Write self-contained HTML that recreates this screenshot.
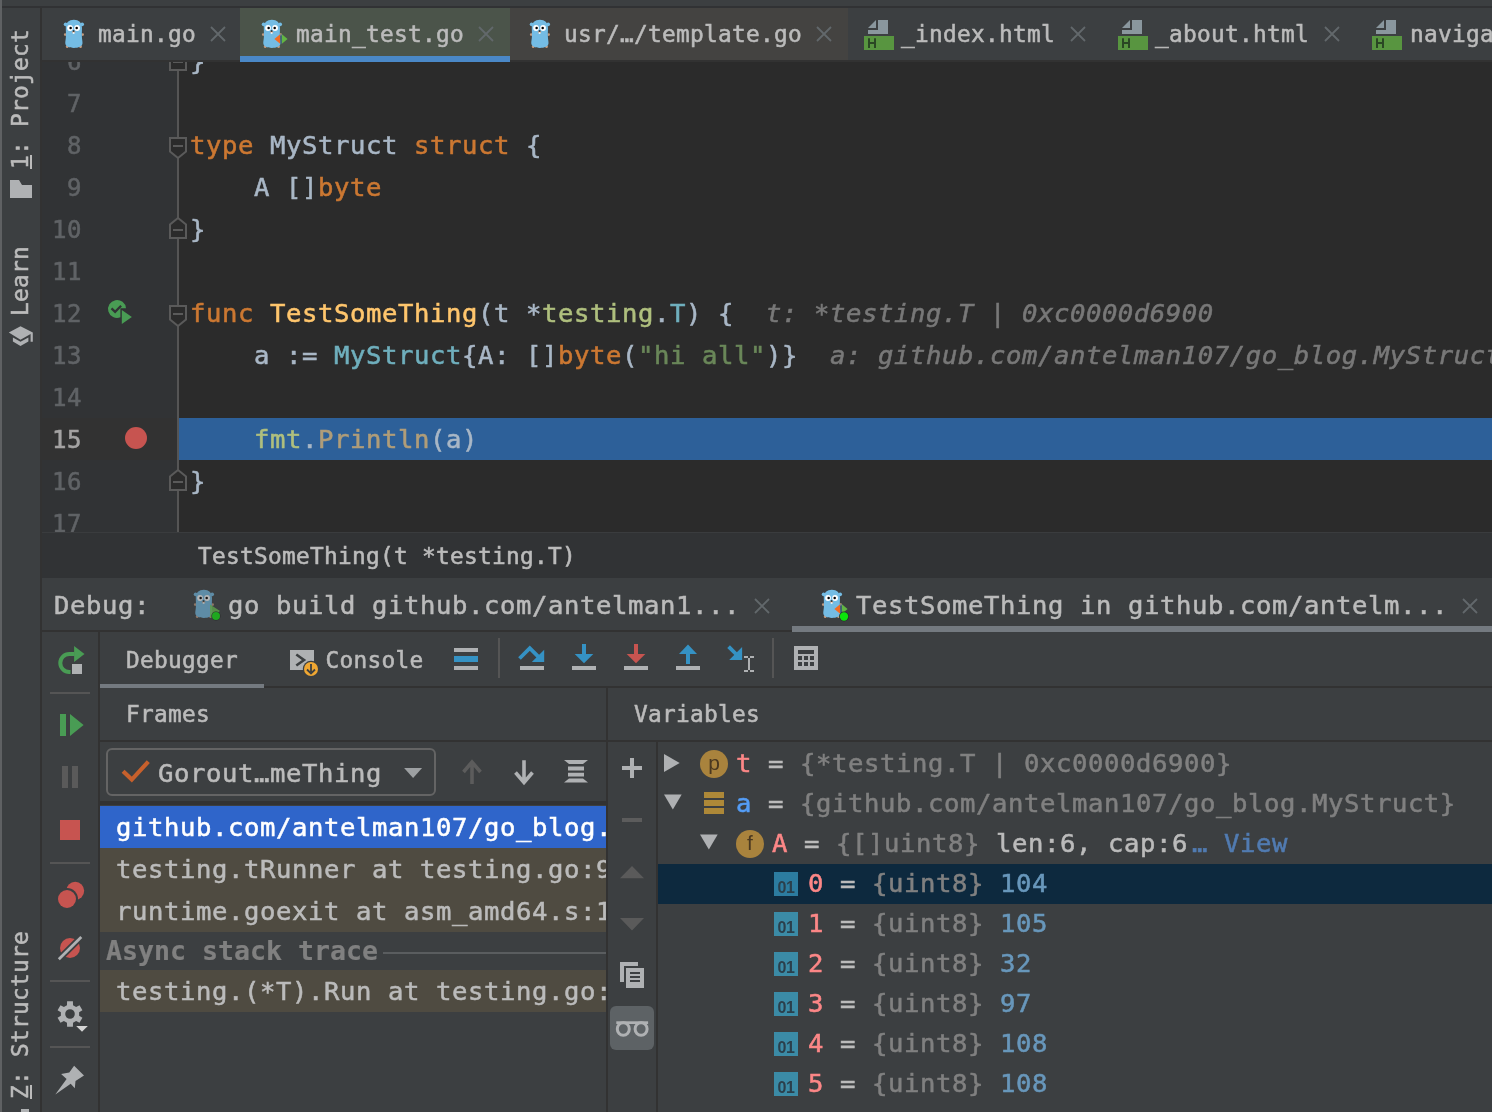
<!DOCTYPE html>
<html><head><meta charset="utf-8">
<style>
html,body{margin:0;padding:0;background:#2b2b2b;}
body{will-change:transform;width:1492px;height:1112px;position:relative;overflow:hidden;font-family:"DejaVu Sans Mono","Liberation Mono",monospace;color:#bbbbbb;-webkit-text-stroke:0.55px;}
.abs{position:absolute;}
.f24{font-size:22.8px;letter-spacing:0.273px;white-space:pre;}
.fln{font-size:24px;letter-spacing:0.5px;white-space:pre;}
.f26{font-size:25.6px;letter-spacing:0.588px;white-space:pre;}
svg{position:absolute;overflow:visible;}
/* top */
#topstrip{left:0;top:0;width:1492px;height:6px;background:#3c3f41;}
#topline{left:0;top:6px;width:1492px;height:2px;background:#313234;}
/* left stripe */
#lstripe{left:0;top:8px;width:42px;height:1104px;background:#3c3f41;}
#lstripe0{left:0;top:0px;width:2px;height:1112px;background:#5f6163;}
#lstripeR{left:40px;top:8px;width:2px;height:1104px;background:#323232;}
.vtext{position:absolute;transform-origin:0 0;transform:rotate(-90deg);line-height:28px;height:28px;color:#bbbbbb;}
/* tabs */
#tabbar{left:42px;top:8px;width:1450px;height:52px;background:#3c3f41;}
.tab{position:absolute;top:8px;height:52px;}
.tablabel{position:absolute;top:8px;height:52px;line-height:52px;color:#bbbbbb;}
/* editor */
#gutter{left:42px;top:60px;width:137px;height:472px;background:#313335;}
#editor{left:179px;top:60px;width:1313px;height:472px;background:#2b2b2b;}
.ln{position:absolute;left:42px;width:40px;text-align:right;height:42px;line-height:42px;margin-top:0.5px;color:#606366;}
.cl{position:absolute;left:190px;height:42px;line-height:42px;color:#a9b7c6;}
.fn2{color:#b09d79;} .k{color:#cc7832;} .fn{color:#ffc66d;} .s{color:#6a8759;} .ty{color:#6fafbd;} .pk{color:#afbf7e;} .h{color:#787878;font-style:italic;}
/* breadcrumb */
#crumb{left:42px;top:532px;width:1450px;height:46px;background:#313335;}
/* debug */
#dbg{left:42px;top:578px;width:1450px;height:534px;background:#3c3f41;}
.hl{position:absolute;background:#323232;}
.row{position:absolute;height:42px;line-height:42px;}
</style></head>
<body>
<div class="abs" id="topstrip"></div><div class="abs" id="topline"></div>
<div class="abs" id="lstripe"></div><div class="abs" id="lstripe0"></div><div class="abs" id="lstripeR"></div>
<div class="abs" id="tabbar"></div>
<!--TABS-->
<svg width="0" height="0" style="left:0;top:0"><defs>
<symbol id="gopher" overflow="visible"><g transform="scale(0.964,1)">
<circle cx="2.7" cy="5.3" r="1.9" fill="#74bce4"/><circle cx="19.9" cy="5.3" r="1.9" fill="#74bce4"/>
<ellipse cx="2.2" cy="15.6" rx="1.2" ry="1.4" fill="#c79b7d"/><ellipse cx="20.5" cy="15.6" rx="1.2" ry="1.4" fill="#c79b7d"/>
<ellipse cx="4.4" cy="27.4" rx="1.4" ry="1.5" fill="#c79b7d"/><ellipse cx="18.2" cy="27.4" rx="1.4" ry="1.5" fill="#c79b7d"/>
<path d="M2.9,9 C2.9,3.6 6.2,0.7 11.3,0.7 C16.4,0.7 19.7,3.6 19.7,9 C19.7,12 19.4,15 19.6,18 C19.8,21 20.4,23 20.2,24.6 C19.9,27.6 16,29 11.3,29 C6.6,29 2.7,27.6 2.4,24.6 C2.2,23 2.8,21 3,18 C3.2,15 2.9,12 2.9,9 Z" fill="#74bce4"/>
<circle cx="7.3" cy="9" r="3" fill="#fff"/><circle cx="14.6" cy="9" r="3" fill="#fff"/>
<circle cx="7.9" cy="9" r="1.3" fill="#000"/><circle cx="14.2" cy="9" r="1.3" fill="#000"/>
<ellipse cx="11" cy="12.9" rx="1.7" ry="1" fill="#c79b7d"/>
<ellipse cx="11" cy="12" rx="1" ry="0.8" fill="#111"/>
<rect x="10.1" y="13.3" width="1.8" height="1.5" fill="#fff"/>
</g></symbol>
<symbol id="gtest" overflow="visible"><use href="#gopher"/>
<path d="M13.4,19.9 L19.1,15.3 L19.1,24.8 Z" fill="#f26a22"/><path d="M26.6,19.9 L20.9,15.3 L20.9,24.8 Z" fill="#62b543"/>
<rect x="19.1" y="15.3" width="1.8" height="9.5" fill="#3d6f8a" opacity="0.7"/>
</symbol>
<symbol id="htmlic" overflow="visible">
<path d="M4,8 L12,0 L12,8 Z" fill="#8a979e"/><path d="M14,0 L24,0 L24,14 L4,14 L4,10 L14,10 Z" fill="#8a979e"/>
<rect x="0" y="16" width="30" height="14" fill="#589540"/>
<path d="M5,18.2 V28 M11,18.2 V28 M5,23 H11" stroke="#2a4724" stroke-width="2" fill="none"/>
</symbol>
<symbol id="closex" overflow="visible"><path d="M-7,-7 L7,7 M7,-7 L-7,7" stroke="#62686b" stroke-width="1.8" fill="none"/></symbol>
</defs></svg>
<div class="abs" style="left:240px;top:8px;width:270px;height:48px;background:#4b544a;"></div>
<div class="abs" style="left:240px;top:56px;width:270px;height:6px;background:#4a88c7;z-index:5;"></div>
<div class="abs" style="left:510px;top:8px;width:338px;height:52px;background:#444341;"></div>
<svg style="left:63px;top:19px" width="32" height="32"><use href="#gopher"/></svg>
<div class="tablabel f24" style="left:98px">main.go</div>
<svg style="left:218px;top:34.2px" width="32" height="32"><use href="#closex"/></svg>
<svg style="left:261px;top:19px" width="32" height="32"><use href="#gtest"/></svg>
<div class="tablabel f24" style="left:296px">main_test.go</div>
<svg style="left:486px;top:34.2px" width="32" height="32"><use href="#closex"/></svg>
<svg style="left:529px;top:19px" width="32" height="32"><use href="#gopher"/></svg>
<div class="tablabel f24" style="left:564px">usr/…/template.go</div>
<svg style="left:824px;top:34.2px" width="32" height="32"><use href="#closex"/></svg>
<svg style="left:864px;top:20px" width="32" height="32"><use href="#htmlic"/></svg>
<div class="tablabel f24" style="left:901px">_index.html</div>
<svg style="left:1078px;top:34.2px" width="32" height="32"><use href="#closex"/></svg>
<svg style="left:1118px;top:20px" width="32" height="32"><use href="#htmlic"/></svg>
<div class="tablabel f24" style="left:1155px">_about.html</div>
<svg style="left:1332px;top:34.2px" width="32" height="32"><use href="#closex"/></svg>
<svg style="left:1372px;top:20px" width="32" height="32"><use href="#htmlic"/></svg>
<div class="tablabel f24" style="left:1410px">navigation.html</div>
<!--/TABS-->
<div class="abs" id="gutter"></div>
<div class="abs" id="editor"></div>
<!--EDITOR-->
<div class="abs" style="left:42px;top:60px;width:1450px;height:2px;background:#323232"></div><div class="abs" style="left:0;top:62px;width:1492px;height:470px;overflow:hidden"><div class="abs" style="left:0;top:-62px;width:1492px;height:1112px">
<div class="abs" style="left:42px;top:418px;width:135px;height:42px;background:#323232;"></div>
<div class="abs" style="left:179px;top:418px;width:1313px;height:42px;background:#2d6099;"></div>
<div class="abs" style="left:177px;top:60px;width:2px;height:472px;background:#555555;"></div>
<svg style="left:0;top:0" width="1" height="1"><path d="M170,138 H186 V151.5 L178,158 L170,151.5 Z" fill="#2b2b2b" stroke="#5a5a5a" stroke-width="2"/><rect x="173" y="145" width="10" height="2" fill="#5a5a5a"/></svg>
<svg style="left:0;top:0" width="1" height="1"><path d="M170,306 H186 V319.5 L178,326 L170,319.5 Z" fill="#2b2b2b" stroke="#5a5a5a" stroke-width="2"/><rect x="173" y="313" width="10" height="2" fill="#5a5a5a"/></svg>
<svg style="left:0;top:0" width="1" height="1"><path d="M170,70 H186 V56.5 L178,50 L170,56.5 Z" fill="#2b2b2b" stroke="#5a5a5a" stroke-width="2"/><rect x="173" y="61" width="10" height="2" fill="#5a5a5a"/></svg>
<svg style="left:0;top:0" width="1" height="1"><path d="M170,238 H186 V224.5 L178,218 L170,224.5 Z" fill="#2b2b2b" stroke="#5a5a5a" stroke-width="2"/><rect x="173" y="229" width="10" height="2" fill="#5a5a5a"/></svg>
<svg style="left:0;top:0" width="1" height="1"><path d="M170,490 H186 V476.5 L178,470 L170,476.5 Z" fill="#2b2b2b" stroke="#5a5a5a" stroke-width="2"/><rect x="173" y="481" width="10" height="2" fill="#5a5a5a"/></svg>
<svg style="left:0;top:0" width="1" height="1"><path d="M120.4,308.3 H126 A9,9 0 1 0 120.4,317.35 Z" fill="#499c54"/><path d="M121.8,310.1 V324.1 L131.9,317 Z" fill="#499c54"/><path d="M111.5,308.4 L115.1,311.8 L121.1,305.8" stroke="#313335" stroke-width="2.3" fill="none"/></svg>
<div class="abs" style="left:125px;top:427px;width:22px;height:22px;border-radius:11px;background:#c75450;"></div>
<div class="ln fln" style="top:40px">6</div>
<div class="ln fln" style="top:82px">7</div>
<div class="ln fln" style="top:124px">8</div>
<div class="ln fln" style="top:166px">9</div>
<div class="ln fln" style="top:208px">10</div>
<div class="ln fln" style="top:250px">11</div>
<div class="ln fln" style="top:292px">12</div>
<div class="ln fln" style="top:334px">13</div>
<div class="ln fln" style="top:376px">14</div>
<div class="ln fln" style="top:418px;color:#a4a3a3">15</div>
<div class="ln fln" style="top:460px">16</div>
<div class="ln fln" style="top:502px">17</div>
<div class="cl f26" style="top:40px">}</div>
<div class="cl f26" style="top:124px"><span class="k">type</span> MyStruct <span class="k">struct</span> {</div>
<div class="cl f26" style="top:166px">    A []<span class="k">byte</span></div>
<div class="cl f26" style="top:208px">}</div>
<div class="cl f26" style="top:292px"><span class="k">func</span> <span class="fn">TestSomeThing</span>(t *<span class="pk">testing</span>.<span class="ty">T</span>) {<span class="h">  t: *testing.T | 0xc0000d6900</span></div>
<div class="cl f26" style="top:334px">    a := <span class="ty">MyStruct</span>{A: []<span class="k">byte</span>(<span class="s">"hi all"</span>)}<span class="h">  a: github.com/antelman107/go_blog.MyStruct{A:[]uint8 len: 6, cap: 6}</span></div>
<div class="cl f26" style="top:418px">    <span class="pk">fmt</span>.<span class="fn2">Println</span>(a)</div>
<div class="cl f26" style="top:460px">}</div>
</div></div>
<!--/EDITOR-->
<div class="abs" id="crumb"></div>
<!--CRUMB-->
<div class="abs" id="dbg"></div>
<!--DEBUG-->
<div class="abs" style="left:42px;top:532px;width:1450px;height:1px;background:#3a3c3e;"></div>
<div class="abs f24" style="left:198px;top:533px;height:46px;line-height:46px;">TestSomeThing(t *testing.T)</div>
<div class="abs f26" style="left:54px;top:579px;height:52px;line-height:52px;">Debug:</div>
<svg style="left:193px;top:589.3px;opacity:0.62" width="32" height="32"><g transform="scale(1)"><use href="#gopher"/></g></svg>
<svg style="left:0;top:0" width="1" height="1"><path d="M210,604.4 V618 L220,611 Z" fill="#5c9c4a" opacity="0.85"/><circle cx="216" cy="616" r="4.6" fill="#2b2d2e"/><circle cx="216" cy="616" r="4" fill="#1fa81f"/></svg>
<div class="abs f26" style="left:228px;top:579px;height:52px;line-height:52px;">go build github.com/antelman1...</div>
<svg style="left:762px;top:606px" width="1" height="1"><use href="#closex"/></svg>
<svg style="left:821.2px;top:589.3px" width="32" height="32"><g transform="scale(1)"><use href="#gtest"/></g></svg>
<svg style="left:0;top:0" width="1" height="1"><circle cx="844" cy="616.5" r="4.9" fill="#2b2d2e"/><circle cx="844" cy="616.5" r="4.2" fill="#0be40b"/></svg>
<div class="abs f26" style="left:856px;top:579px;height:52px;line-height:52px;">TestSomeThing in github.com/antelm...</div>
<svg style="left:1470px;top:606px" width="1" height="1"><use href="#closex"/></svg>
<div class="abs" style="left:42px;top:630px;width:1450px;height:2px;background:#323232;"></div>
<div class="abs" style="left:792px;top:626px;width:700px;height:6px;background:#747a80;"></div>
<div class="abs" style="left:98px;top:632px;width:2px;height:480px;background:#323232;"></div>
<div class="abs f24" style="left:126px;top:633px;height:54px;line-height:54px;">Debugger</div>
<div class="abs" style="left:100px;top:686px;width:1392px;height:2px;background:#323232;"></div>
<div class="abs" style="left:100px;top:684px;width:164px;height:4px;background:#747a80;"></div>
<svg style="left:0;top:0" width="1" height="1"><rect x="290" y="650" width="24" height="20" fill="#afb1b3"/><path d="M296.3,654.5 L304,660 L296.3,665.5" stroke="#3c3f41" stroke-width="2.6" fill="none"/><circle cx="311" cy="669" r="8.2" fill="#3c3f41"/><circle cx="311" cy="669" r="7" fill="#f0a732"/><path d="M311,664 V673 M307,669.5 L311,673.5 L315,669.5" stroke="#3c3f41" stroke-width="1.8" fill="none"/></svg>
<div class="abs f24" style="left:325.5px;top:633px;height:54px;line-height:54px;">Console</div>
<svg style="left:0;top:0" width="1" height="1"><rect x="454" y="648" width="24" height="4" fill="#afb1b3"/><rect x="454" y="656" width="24" height="6" fill="#3592c4"/><rect x="454" y="666" width="24" height="4" fill="#afb1b3"/></svg>
<div class="abs" style="left:498px;top:638px;width:2px;height:40px;background:#555555;"></div>
<svg style="left:0;top:0" width="1" height="1"><rect x="520" y="666" width="24" height="4" fill="#afb1b3"/><path d="M519.5,658.5 L529.8,648.2 L539,657.4" stroke="#3592c4" stroke-width="3.8" fill="none"/><path d="M544.2,649.7 V662 H531.8 Z" fill="#3592c4"/></svg>
<svg style="left:0;top:0" width="1" height="1"><rect x="572" y="666" width="24" height="4" fill="#afb1b3"/><rect x="582" y="644" width="4" height="10.5" fill="#3592c4"/><path d="M574.7,654 H593.3 L584,663.2 Z" fill="#3592c4"/></svg>
<svg style="left:0;top:0" width="1" height="1"><rect x="624" y="666" width="24" height="4" fill="#afb1b3"/><rect x="634" y="644" width="4" height="10.5" fill="#c75450"/><path d="M626.7,654 H645.3 L636,663.2 Z" fill="#c75450"/></svg>
<svg style="left:0;top:0" width="1" height="1"><rect x="676" y="666" width="24" height="4" fill="#afb1b3"/><rect x="686" y="653.5" width="4" height="10.5" fill="#3592c4"/><path d="M679,654 H697 L688,644.6 Z" fill="#3592c4"/></svg>
<svg style="left:0;top:0" width="1" height="1"><path d="M728.6,646.6 L738,656" stroke="#3592c4" stroke-width="3.8" fill="none"/><path d="M742.1,647 V660 H729.2 Z" fill="#3592c4"/><path d="M744,657 H748 M750,657 H754 M749,658 V670 M744,671 H748 M750,671 H754" stroke="#afb1b3" stroke-width="2" fill="none"/></svg>
<div class="abs" style="left:772px;top:638px;width:2px;height:40px;background:#555555;"></div>
<svg style="left:0;top:0" width="1" height="1"><rect x="794" y="646" width="24" height="24" fill="#afb1b3"/><rect x="798" y="650" width="16" height="4" fill="#3c3f41"/><rect x="798" y="656" width="4" height="4" fill="#3c3f41"/><rect x="798" y="662" width="4" height="4" fill="#3c3f41"/><rect x="804" y="656" width="4" height="4" fill="#3c3f41"/><rect x="804" y="662" width="4" height="4" fill="#3c3f41"/><rect x="810" y="656" width="4" height="4" fill="#3c3f41"/><rect x="810" y="662" width="4" height="4" fill="#3c3f41"/></svg>
<svg style="left:0;top:0" width="1" height="1"><path d="M74.5,654 H69.3 A9,9 0 1 0 69.3,672 H70.5" stroke="#499c54" stroke-width="4" fill="none"/><path d="M74.1,646 V662 L84.5,654 Z" fill="#499c54"/><rect x="72" y="664" width="10" height="10" fill="#afb1b3"/></svg>
<div class="abs" style="left:50px;top:692px;width:40px;height:2px;background:#555555;"></div>
<div class="abs" style="left:50px;top:862px;width:40px;height:2px;background:#555555;"></div>
<div class="abs" style="left:50px;top:980px;width:40px;height:2px;background:#555555;"></div>
<div class="abs" style="left:50px;top:1046px;width:40px;height:2px;background:#555555;"></div>
<svg style="left:0;top:0" width="1" height="1"><rect x="60" y="714" width="6" height="22" fill="#499c54"/><path d="M70,714 V736 L83.6,725 Z" fill="#499c54"/></svg>
<svg style="left:0;top:0" width="1" height="1"><rect x="62" y="766" width="6" height="22" fill="#5a5a5a"/><rect x="72" y="766" width="6" height="22" fill="#5a5a5a"/></svg>
<div class="abs" style="left:60px;top:820px;width:20px;height:20px;background:#c75450;"></div>
<svg style="left:0;top:0" width="1" height="1"><circle cx="75.2" cy="890.8" r="9" fill="#c75450"/><circle cx="67" cy="899" r="11" fill="#3c3f41"/><circle cx="67" cy="899" r="9" fill="#c75450"/></svg>
<svg style="left:0;top:0" width="1" height="1"><circle cx="70" cy="948" r="10" fill="#c75450"/><path d="M58.8,959.2 L81.3,937" stroke="#3c3f41" stroke-width="6.5"/><path d="M58.8,959.2 L81.3,937" stroke="#afb1b3" stroke-width="2.8"/></svg>
<svg style="left:0;top:0" width="1" height="1"><path d="M66.97,1005.21 L67.08,1001.33 L72.92,1001.33 L73.03,1005.21 L76.10,1006.98 L79.51,1005.13 L82.43,1010.20 L79.13,1012.23 L79.13,1015.77 L82.43,1017.80 L79.51,1022.87 L76.10,1021.02 L73.03,1022.79 L72.92,1026.67 L67.08,1026.67 L66.97,1022.79 L63.90,1021.02 L60.49,1022.87 L57.57,1017.80 L60.87,1015.77 L60.87,1012.23 L57.57,1010.20 L60.49,1005.13 L63.90,1006.98 Z M65.2,1014 a4.8,4.8 0 1 0 9.6,0 a4.8,4.8 0 1 0 -9.6,0 Z" fill="#afb1b3" fill-rule="evenodd"/><path d="M76.2,1026 H87.8 L82,1031.8 Z" fill="#d4d4d4"/></svg>
<svg style="left:0;top:0" width="1" height="1"><path d="M55.3,1094.6 L66.6,1079 L61.1,1074.1 L69.3,1072.4 L74.1,1065.7 L84,1075.5 L75.5,1081 L74.8,1088.2 L70.7,1083.7 Z" fill="#afb1b3"/></svg>
<div class="abs f24" style="left:126px;top:688px;height:52px;line-height:52px;">Frames</div>
<div class="abs f24" style="left:634px;top:688px;height:52px;line-height:52px;">Variables</div>
<div class="abs" style="left:100px;top:740px;width:1392px;height:2px;background:#323232;"></div>
<div class="abs" style="left:606px;top:688px;width:2px;height:424px;background:#323232;"></div>
<div class="abs" style="left:656px;top:742px;width:2px;height:370px;background:#323232;"></div>
<div class="abs" style="left:106px;top:748px;width:326px;height:44px;border:2px solid #646464;border-radius:6px;"></div>
<svg style="left:0;top:0" width="1" height="1"><path d="M123.1,771.2 L131.8,779.6 L148.3,761.7" stroke="#c7602c" stroke-width="4.2" fill="none"/></svg>
<div class="abs f26" style="left:158px;top:749px;height:48px;line-height:48px;">Gorout…meThing</div>
<svg style="left:0;top:0" width="1" height="1"><path d="M404.1,768.1 H422.1 L413.1,778 Z" fill="#9da0a2"/></svg>
<svg style="left:0;top:0" width="1" height="1"><path d="M472,784 V762.5 M463.5,772 L472,762 L480.5,772" stroke="#5c5c5c" stroke-width="3.6" fill="none"/></svg>
<svg style="left:0;top:0" width="1" height="1"><path d="M524,760.3 V782 M515.5,772.5 L524,782.5 L532.5,772.5" stroke="#afb1b3" stroke-width="3.6" fill="none"/></svg>
<svg style="left:0;top:0" width="1" height="1"><path d="M564,760 H588 L583,764 H569 Z M568,766.6 H584 V770.4 H568 Z M568,772.8 H584 V776.6 H568 Z M569,778.4 H583 L588,782.4 H564 Z" fill="#afb1b3"/></svg>
<div class="abs" style="left:100px;top:801px;width:506px;height:4px;background:#323232;"></div>
<div class="abs" style="left:100px;top:806px;width:506px;height:42px;background:#2f65ca;"></div>
<div class="abs" style="left:100px;top:848px;width:506px;height:84px;background:#4f4b41;"></div>
<div class="abs" style="left:100px;top:970px;width:506px;height:42px;background:#4f4b41;"></div>
<div class="abs f26" style="left:116px;top:806px;height:42px;line-height:42px;color:#ffffff;overflow:hidden;width:490px;">github.com/antelman107/go_blog.TestSomeThing</div>
<div class="abs f26" style="left:116px;top:848px;height:42px;line-height:42px;overflow:hidden;width:490px;">testing.tRunner at testing.go:909</div>
<div class="abs f26" style="left:116px;top:890px;height:42px;line-height:42px;overflow:hidden;width:490px;">runtime.goexit at asm_amd64.s:1357</div>
<div class="abs f26" style="left:106px;top:932px;height:38px;line-height:38px;color:#808080;font-weight:bold;-webkit-text-stroke:0.2px;font-size:26.5px;letter-spacing:0.05px;">Async stack trace</div>
<div class="abs" style="left:383px;top:952px;width:223px;height:2px;background:#5a5d5f;"></div>
<div class="abs f26" style="left:116px;top:970px;height:42px;line-height:42px;overflow:hidden;width:490px;">testing.(*T).Run at testing.go:960</div>
<svg style="left:0;top:0" width="1" height="1"><path d="M622,768 H642 M632,758 V778" stroke="#afb1b3" stroke-width="4" fill="none"/></svg>
<div class="abs" style="left:622px;top:818px;width:20px;height:4px;background:#5c5c5c;"></div>
<svg style="left:0;top:0" width="1" height="1"><path d="M620,878.3 H644 L632,866 Z M620,918 H644 L632,930.5 Z" fill="#5a5a5a"/></svg>
<svg style="left:0;top:0" width="1" height="1"><path d="M620,962 H638 V966 H624 V982 H620 Z" fill="#afb1b3"/><rect x="626" y="968" width="18" height="20" fill="#afb1b3"/><path d="M630,973 H640 M630,977 H640 M630,981 H640" stroke="#3c3f41" stroke-width="2"/></svg>
<div class="abs" style="left:610px;top:1006px;width:44px;height:44px;border-radius:6px;background:#5d6265;"></div>
<svg style="left:0;top:0" width="1" height="1"><ellipse cx="623.3" cy="1029" rx="6" ry="6.3" stroke="#afb1b3" stroke-width="3" fill="none"/><ellipse cx="641.1" cy="1029" rx="6" ry="6.3" stroke="#afb1b3" stroke-width="3" fill="none"/><rect x="616.3" y="1021.3" width="31.8" height="2.7" fill="#afb1b3"/></svg>
<div class="abs" style="left:658px;top:864px;width:834px;height:40px;background:#0d293e;"></div>
<svg style="left:0;top:0" width="1" height="1"><path d="M664,754 V772 L679.7,763 Z" fill="#afb1b3"/></svg>
<div class="abs" style="left:700px;top:750px;width:28px;height:28px;border-radius:14px;background:#a9833d;"></div><div class="abs" style="left:700px;top:749px;width:28px;height:28px;line-height:28px;text-align:center;font-family:'Liberation Sans',sans-serif;font-size:21px;color:#4a3820;-webkit-text-stroke:0;">p</div>
<div class="abs f26" style="left:736px;top:743px;height:40px;line-height:40px;"><span style="color:#fc8787">t</span> = <span style="color:#808080">{*testing.T | 0xc0000d6900}</span></div>
<svg style="left:0;top:0" width="1" height="1"><path d="M664,794.5 H681.7 L672.85,809.5 Z" fill="#afb1b3"/></svg>
<svg style="left:0;top:0" width="1" height="1"><rect x="704" y="792" width="20" height="6" fill="#ad8838"/><rect x="704" y="800" width="20" height="6" fill="#ad8838"/><rect x="704" y="808" width="20" height="6" fill="#ad8838"/></svg>
<div class="abs f26" style="left:736px;top:783px;height:40px;line-height:40px;"><span style="color:#549df6">a</span> = <span style="color:#808080">{github.com/antelman107/go_blog.MyStruct}</span></div>
<svg style="left:0;top:0" width="1" height="1"><path d="M700,834.5 H717.7 L708.85,849.5 Z" fill="#afb1b3"/></svg>
<div class="abs" style="left:736px;top:830px;width:28px;height:28px;border-radius:14px;background:#a9833d;"></div><div class="abs" style="left:736px;top:829px;width:28px;height:28px;line-height:28px;text-align:center;font-family:'Liberation Sans',sans-serif;font-size:21px;color:#4a3820;-webkit-text-stroke:0;">f</div>
<div class="abs f26" style="left:772px;top:823px;height:40px;line-height:40px;"><span style="color:#fc8787">A</span> = <span style="color:#808080">{[]uint8}</span> len:6, cap:6<span style="color:#517bb1;margin-left:4px">…<span style="margin-left:0px"> View</span></span></div>
<div class="abs" style="left:774px;top:872px;width:24px;height:24px;background:#2c7ca0;"></div>
<div class="abs" style="left:774px;top:876px;width:24px;height:24px;line-height:24px;text-align:center;font-family:'Liberation Sans',sans-serif;font-size:16px;font-weight:bold;letter-spacing:-0.3px;color:#2b3f4b;-webkit-text-stroke:0;">01</div>
<div class="abs f26" style="left:808px;top:863px;height:40px;line-height:40px;"><span style="color:#fc8787">0</span> = <span style="color:#808080">{uint8}</span> <span style="color:#6897bb">104</span></div>
<div class="abs" style="left:774px;top:912px;width:24px;height:24px;background:#3b8ba6;"></div>
<div class="abs" style="left:774px;top:916px;width:24px;height:24px;line-height:24px;text-align:center;font-family:'Liberation Sans',sans-serif;font-size:16px;font-weight:bold;letter-spacing:-0.3px;color:#2b3f4b;-webkit-text-stroke:0;">01</div>
<div class="abs f26" style="left:808px;top:903px;height:40px;line-height:40px;"><span style="color:#fc8787">1</span> = <span style="color:#808080">{uint8}</span> <span style="color:#6897bb">105</span></div>
<div class="abs" style="left:774px;top:952px;width:24px;height:24px;background:#3b8ba6;"></div>
<div class="abs" style="left:774px;top:956px;width:24px;height:24px;line-height:24px;text-align:center;font-family:'Liberation Sans',sans-serif;font-size:16px;font-weight:bold;letter-spacing:-0.3px;color:#2b3f4b;-webkit-text-stroke:0;">01</div>
<div class="abs f26" style="left:808px;top:943px;height:40px;line-height:40px;"><span style="color:#fc8787">2</span> = <span style="color:#808080">{uint8}</span> <span style="color:#6897bb">32</span></div>
<div class="abs" style="left:774px;top:992px;width:24px;height:24px;background:#3b8ba6;"></div>
<div class="abs" style="left:774px;top:996px;width:24px;height:24px;line-height:24px;text-align:center;font-family:'Liberation Sans',sans-serif;font-size:16px;font-weight:bold;letter-spacing:-0.3px;color:#2b3f4b;-webkit-text-stroke:0;">01</div>
<div class="abs f26" style="left:808px;top:983px;height:40px;line-height:40px;"><span style="color:#fc8787">3</span> = <span style="color:#808080">{uint8}</span> <span style="color:#6897bb">97</span></div>
<div class="abs" style="left:774px;top:1032px;width:24px;height:24px;background:#3b8ba6;"></div>
<div class="abs" style="left:774px;top:1036px;width:24px;height:24px;line-height:24px;text-align:center;font-family:'Liberation Sans',sans-serif;font-size:16px;font-weight:bold;letter-spacing:-0.3px;color:#2b3f4b;-webkit-text-stroke:0;">01</div>
<div class="abs f26" style="left:808px;top:1023px;height:40px;line-height:40px;"><span style="color:#fc8787">4</span> = <span style="color:#808080">{uint8}</span> <span style="color:#6897bb">108</span></div>
<div class="abs" style="left:774px;top:1072px;width:24px;height:24px;background:#3b8ba6;"></div>
<div class="abs" style="left:774px;top:1076px;width:24px;height:24px;line-height:24px;text-align:center;font-family:'Liberation Sans',sans-serif;font-size:16px;font-weight:bold;letter-spacing:-0.3px;color:#2b3f4b;-webkit-text-stroke:0;">01</div>
<div class="abs f26" style="left:808px;top:1063px;height:40px;line-height:40px;"><span style="color:#fc8787">5</span> = <span style="color:#808080">{uint8}</span> <span style="color:#6897bb">108</span></div>
<!--/DEBUG-->
<!--LEFT-->
<div class="vtext f24" style="left:5.8px;top:169px;letter-spacing:0.28px"><u>1</u>: Project</div>
<svg style="left:0;top:0" width="1" height="1"><path d="M10,180 H19 L22,185 H32 V198 H10 Z" fill="#afb1b3"/></svg>
<div class="vtext f24" style="left:5.8px;top:316px;letter-spacing:0.28px">Learn</div>
<svg style="left:0;top:0" width="1" height="1"><path d="M8.8,332.6 L20.5,326.2 L32.8,332.6 V341.8 H30.6 V333.9 L20.5,339.8 Z M12.9,337.5 L20.5,341.8 L28.4,337.5 V341.6 L20.5,346.1 L12.9,341.6 Z" fill="#afb1b3"/></svg>
<div class="vtext f24" style="left:5.8px;top:1098.5px;letter-spacing:0.28px"><u>Z</u>: Structure</div>
<svg style="left:0;top:0" width="1" height="1"><rect x="21" y="1109" width="8" height="3" fill="#afb1b3"/></svg>
<!--/LEFT-->
</body></html>
